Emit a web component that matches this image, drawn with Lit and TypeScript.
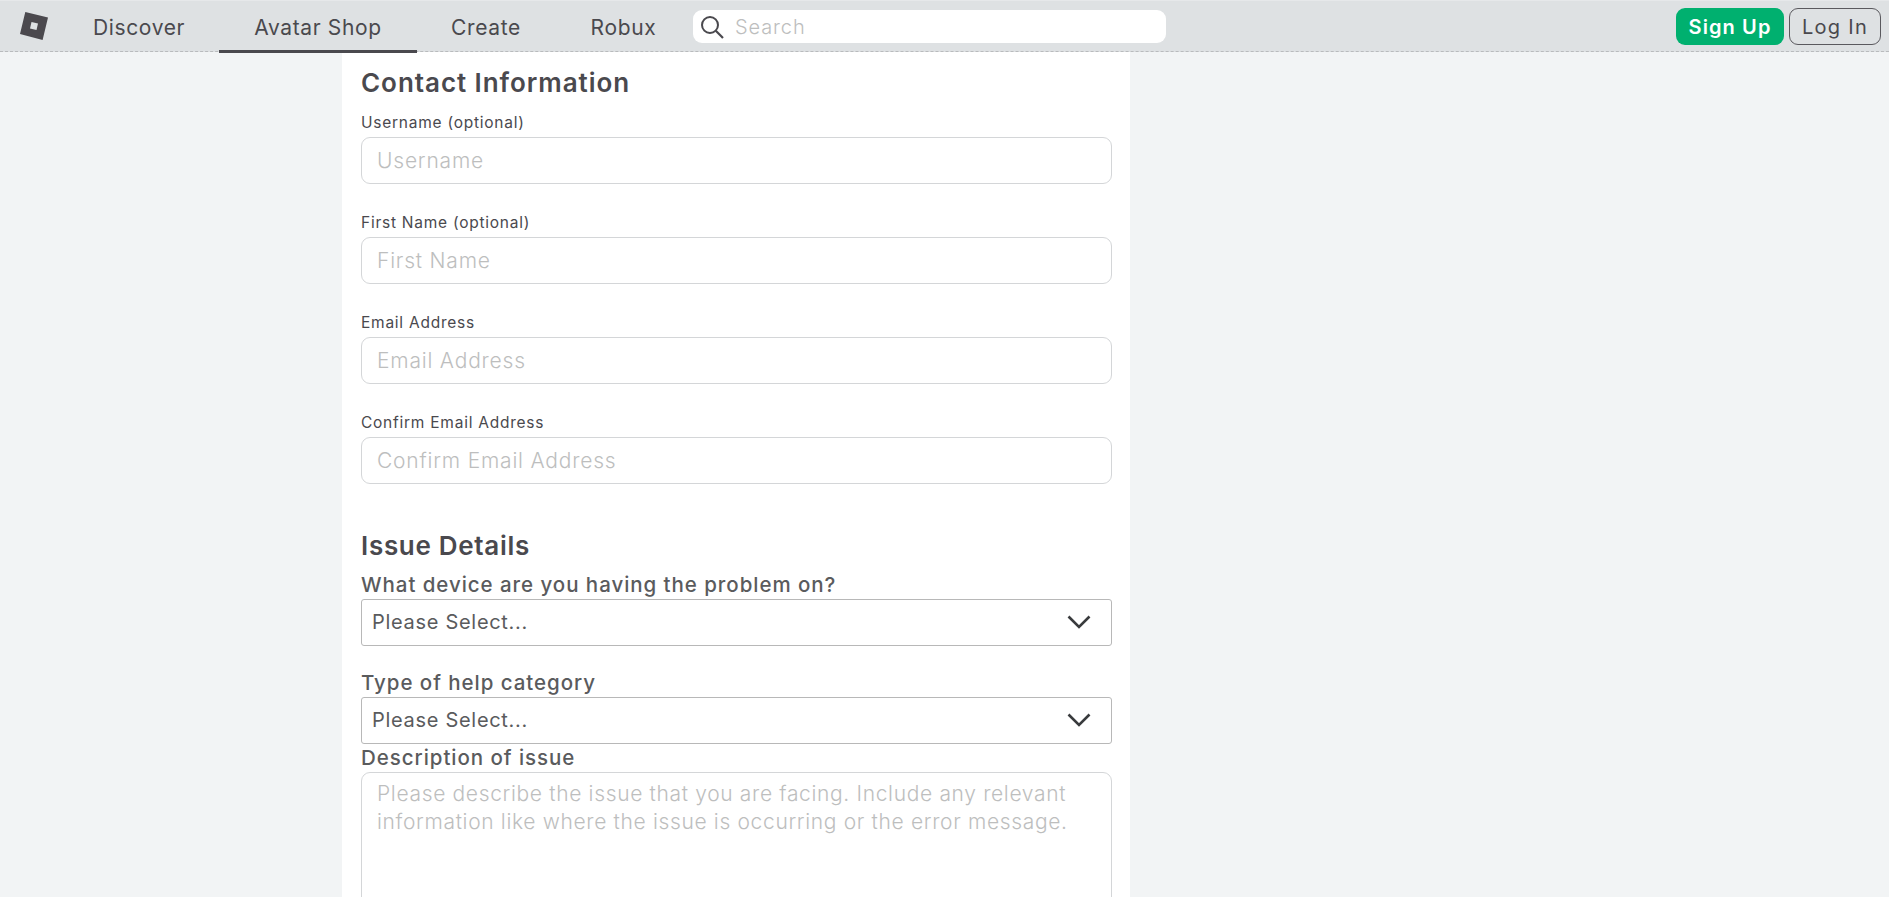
import { LitElement, html, css } from "lit";
import { customElement } from "lit/decorators.js";

const chevron = html`<svg class="chev" width="26" height="16" viewBox="0 0 26 16" aria-hidden="true"><path d="M2.5 2.5 L13 13 L23.5 2.5" fill="none" stroke="#393b3d" stroke-width="2.6"/></svg>`;

@customElement("app-root")
export class AppRoot extends LitElement {
  static styles = css`
    :host { display: block; height: 100vh; overflow: hidden; background: #f2f4f5; color: #4a494e; font-family: Inter, "Liberation Sans", sans-serif; }
    * { box-sizing: border-box; }
    .top { display: flex; align-items: center; height: 52px; background: #dee1e3; border-top: 1px solid #e6e8ea; border-bottom: 1px dashed #b9bbbd; }
    .logo { width: 59px; height: 100%; flex: none; display: flex; align-items: center; justify-content: flex-start; padding-left: 20px; padding-bottom: 1px; }
    .nav { height: 52px; margin-bottom: -1px; display: flex; align-items: center; justify-content: center; font-size: 21px; font-weight: 400; letter-spacing: 0.65px; color: #4a494e; flex: none; border-bottom: 3px solid transparent; padding-top: 5px; }
    .n1 { width: 160px; }
    .n2 { width: 198px; }
    .n3 { width: 138px; }
    .n4 { width: 137px; }
    .nav.on { border-bottom-color: #4a494e; }
    .search { margin-top: 1px; margin-left: 1px; width: 473px; height: 33px; background: #fff; border-radius: 9px; display: flex; align-items: center; gap: 11px; padding-left: 7px; flex: none; }
    .search input { border: 0; outline: 0; flex: 1; min-width: 0; background: transparent; font: inherit; font-size: 20px; letter-spacing: 0.9px; font-weight: 300; padding: 0; color: #393b3d; }
    .search input::placeholder { color: #bdbebe; opacity: 1; }
    .actions { margin-left: auto; margin-top: 1px; display: flex; gap: 5px; padding-right: 8px; }
    .btn { height: 37px; border-radius: 9px; display: flex; align-items: center; justify-content: center; font-size: 20px; padding-top: 1px; }
    .signup { width: 108px; background: #00b06f; color: #fff; font-weight: 600; letter-spacing: 1.1px; }
    .login { width: 92px; border: 1px solid #5a595e; color: #4a494e; font-weight: 400; letter-spacing: 1.3px; }
    .card { margin-left: 342px; width: 788px; background: #fff; padding: 16px 18px 40px 19px; min-height: 900px; }
    h2 { margin: 0; font-size: 26px; line-height: 30px; font-weight: 600; letter-spacing: 0.95px; color: #4a494e; }
    .c1 { margin-bottom: 15px; }
    .c2 { margin-top: 47px; margin-bottom: 12px; letter-spacing: 0.7px; }
    .lab { display: block; font-size: 15.5px; line-height: 20px; margin-bottom: 4px; letter-spacing: 0.75px; color: #4a494e; font-weight: 400; }
    .group { margin-bottom: 29px; }
    .group.last { margin-bottom: 0; }
    .txt { display: block; width: 100%; height: 47px; border: 1px solid #d4d6d8; border-radius: 9px; padding: 0 15px; font: inherit; font-size: 21px; font-weight: 300; letter-spacing: 0.8px; outline: 0; background: #fff; }
    .txt::placeholder, textarea::placeholder { color: #bdbebe; opacity: 1; }
    .qlab { display: block; font-size: 20.5px; line-height: 24px; font-weight: 500; letter-spacing: 0.95px; color: #5a5b5d; margin-bottom: 2px; }
    .sel { position: relative; height: 47px; }
    select { appearance: none; width: 100%; height: 100%; border: 1px solid #b8b8b8; border-radius: 3px; background: #fff; font: inherit; font-size: 20px; font-weight: 400; letter-spacing: 0.7px; color: #5a5b5d; padding: 0 10px 2px; outline: 0; }
    .chev { position: absolute; right: 20px; top: 15px; pointer-events: none; }
    .q2 { margin-top: 25px; margin-bottom: 2px; }
    .q3 { margin-top: 2px; margin-bottom: 2px; }
    textarea { display: block; width: 100%; height: 200px; resize: none; border: 1px solid #d4d6d8; border-radius: 9px; padding: 7px 15px; font: inherit; font-size: 21px; line-height: 28px; font-weight: 300; letter-spacing: 0.66px; outline: 0; background: #fff; }
  `;

  private field(label: string, ph: string, last = false) {
    return html`<div class="group ${last ? "last" : ""}"><label class="lab">${label}</label><input class="txt" placeholder=${ph} /></div>`;
  }

  render() {
    return html`
      <header class="top">
        <div class="logo">
          <svg width="28" height="28" viewBox="0 0 28 28" aria-hidden="true"><path fill-rule="evenodd" d="M5.3 0 L28 5.6 L22.6 28 L0 22 Z M11.5 10 L10 16.5 L16.5 18 L18 11.5 Z" fill="#4b494e"/></svg>
        </div>
        <div class="nav n1">Discover</div>
        <div class="nav n2 on">Avatar Shop</div>
        <div class="nav n3">Create</div>
        <div class="nav n4">Robux</div>
        <div class="search">
          <svg width="24" height="24" viewBox="0 0 24 24" aria-hidden="true"><circle cx="10" cy="10" r="8" fill="none" stroke="#4a494e" stroke-width="2"/><path d="M15.8 15.8 L23 23" stroke="#4a494e" stroke-width="2.2" fill="none"/></svg>
          <input placeholder="Search" />
        </div>
        <div class="actions">
          <div class="btn signup">Sign Up</div>
          <div class="btn login">Log In</div>
        </div>
      </header>
      <main class="card">
        <h2 class="c1">Contact Information</h2>
        ${this.field("Username (optional)", "Username")}
        ${this.field("First Name (optional)", "First Name")}
        ${this.field("Email Address", "Email Address")}
        ${this.field("Confirm Email Address", "Confirm Email Address", true)}
        <h2 class="c2">Issue Details</h2>
        <label class="qlab">What device are you having the problem on?</label>
        <div class="sel"><select><option>Please Select...</option></select>${chevron}</div>
        <label class="qlab q2">Type of help category</label>
        <div class="sel"><select><option>Please Select...</option></select>${chevron}</div>
        <label class="qlab q3">Description of issue</label>
        <textarea placeholder="Please describe the issue that you are facing. Include any relevant information like where the issue is occurring or the error message."></textarea>
      </main>
    `;
  }
}
